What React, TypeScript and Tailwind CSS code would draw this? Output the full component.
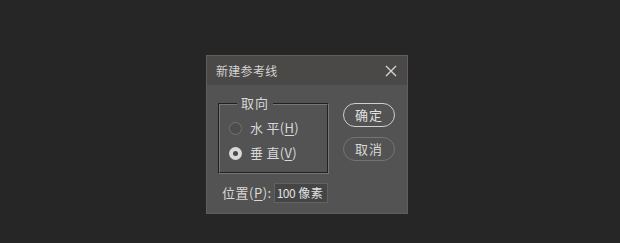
import React, { useState } from 'react';

const font = "font-['Noto_Sans_CJK_SC','Noto_Sans',sans-serif]";

const Radio = ({ checked, onClick, label, mnemonic }: { checked: boolean; onClick: () => void; label: string; mnemonic: string }) => (
  <div onClick={onClick} className="flex items-center h-[20px] cursor-default">
    {checked ? (
      <span className="w-[13px] h-[13px] rounded-full bg-[#d9d9d9] flex items-center justify-center">
        <span className="w-[5px] h-[5px] rounded-full bg-[#4a4a4a]" />
      </span>
    ) : (
      <span className="w-[13px] h-[13px] rounded-full border border-[#727272] bg-[#4d4d4d]" />
    )}
    <span className="ml-[8px] whitespace-nowrap text-[13px] leading-[20px] tracking-[0.3px] text-[#d8d8d8]">
      {label}(<span className="underline underline-offset-2">{mnemonic}</span>)
    </span>
  </div>
);

export default function App() {
  const [vertical, setVertical] = useState(true);

  return (
    <div className={`w-full h-[243px] bg-[#262626] pl-[206px] pt-[55px] ${font}`}>
      <div className="w-[202px] h-[159px] bg-[#535353] border border-[#5e5e5e] flex flex-col overflow-hidden">
        <div className="h-[29px] shrink-0 bg-[#4a4948] flex items-center justify-between pl-[9px] pr-[10px]">
          <span className="text-[12px] text-[#d2d2d2] tracking-[0.3px] whitespace-nowrap">新建参考线</span>
          <svg width="12" height="12" viewBox="0 0 12 12" className="text-[#d4d4d4]">
            <path d="M1 1L11 11M11 1L1 11" stroke="currentColor" strokeWidth="1.4" fill="none" />
          </svg>
        </div>
        <div className="flex flex-col pl-[11px]">
          <div className="flex items-start mt-[18px]">
            <div className="relative w-[111px] h-[71px] shrink-0 border-2 border-[#767676] [border-style:groove] px-[9px] pt-[13px]">
              <span className="absolute top-[-10px] left-[17px] px-[4px] bg-[#535353] text-[13px] leading-[16px] tracking-[1px] text-[#d8d8d8] whitespace-nowrap">
                取向
              </span>
              <div className="flex flex-col gap-[5px]">
                <Radio checked={!vertical} onClick={() => setVertical(false)} label="水 平" mnemonic="H" />
                <Radio checked={vertical} onClick={() => setVertical(true)} label="垂 直" mnemonic="V" />
              </div>
            </div>
            <div className="ml-[14px] flex flex-col gap-[10px]">
              <button className="w-[52px] h-[24px] rounded-full border-[1.5px] border-[#cfcfcf] text-[13px] tracking-[1px] text-[#e0e0e0] flex items-center justify-center">
                确定
              </button>
              <button className="w-[52px] h-[24px] rounded-full border border-[#747474] text-[13px] tracking-[1px] text-[#d8d8d8] flex items-center justify-center">
                取消
              </button>
            </div>
          </div>
          <div className="flex items-center mt-[9px] pl-[4px] gap-[2px]">
            <span className="text-[13px] whitespace-nowrap tracking-[0.5px] text-[#d8d8d8]">
              位置(<span className="underline underline-offset-2">P</span>):
            </span>
            <div className="w-[54px] h-[20px] shrink-0 bg-[#454545] border border-[#626262] flex items-center pl-[2px] text-[12px] text-[#e2e2e2] whitespace-nowrap overflow-hidden">
              <span className="tracking-[-0.5px]">100</span>
              <span className="ml-[3px] tracking-[0.5px]">像素</span>
            </div>
          </div>
        </div>
      </div>
    </div>
  );
}
